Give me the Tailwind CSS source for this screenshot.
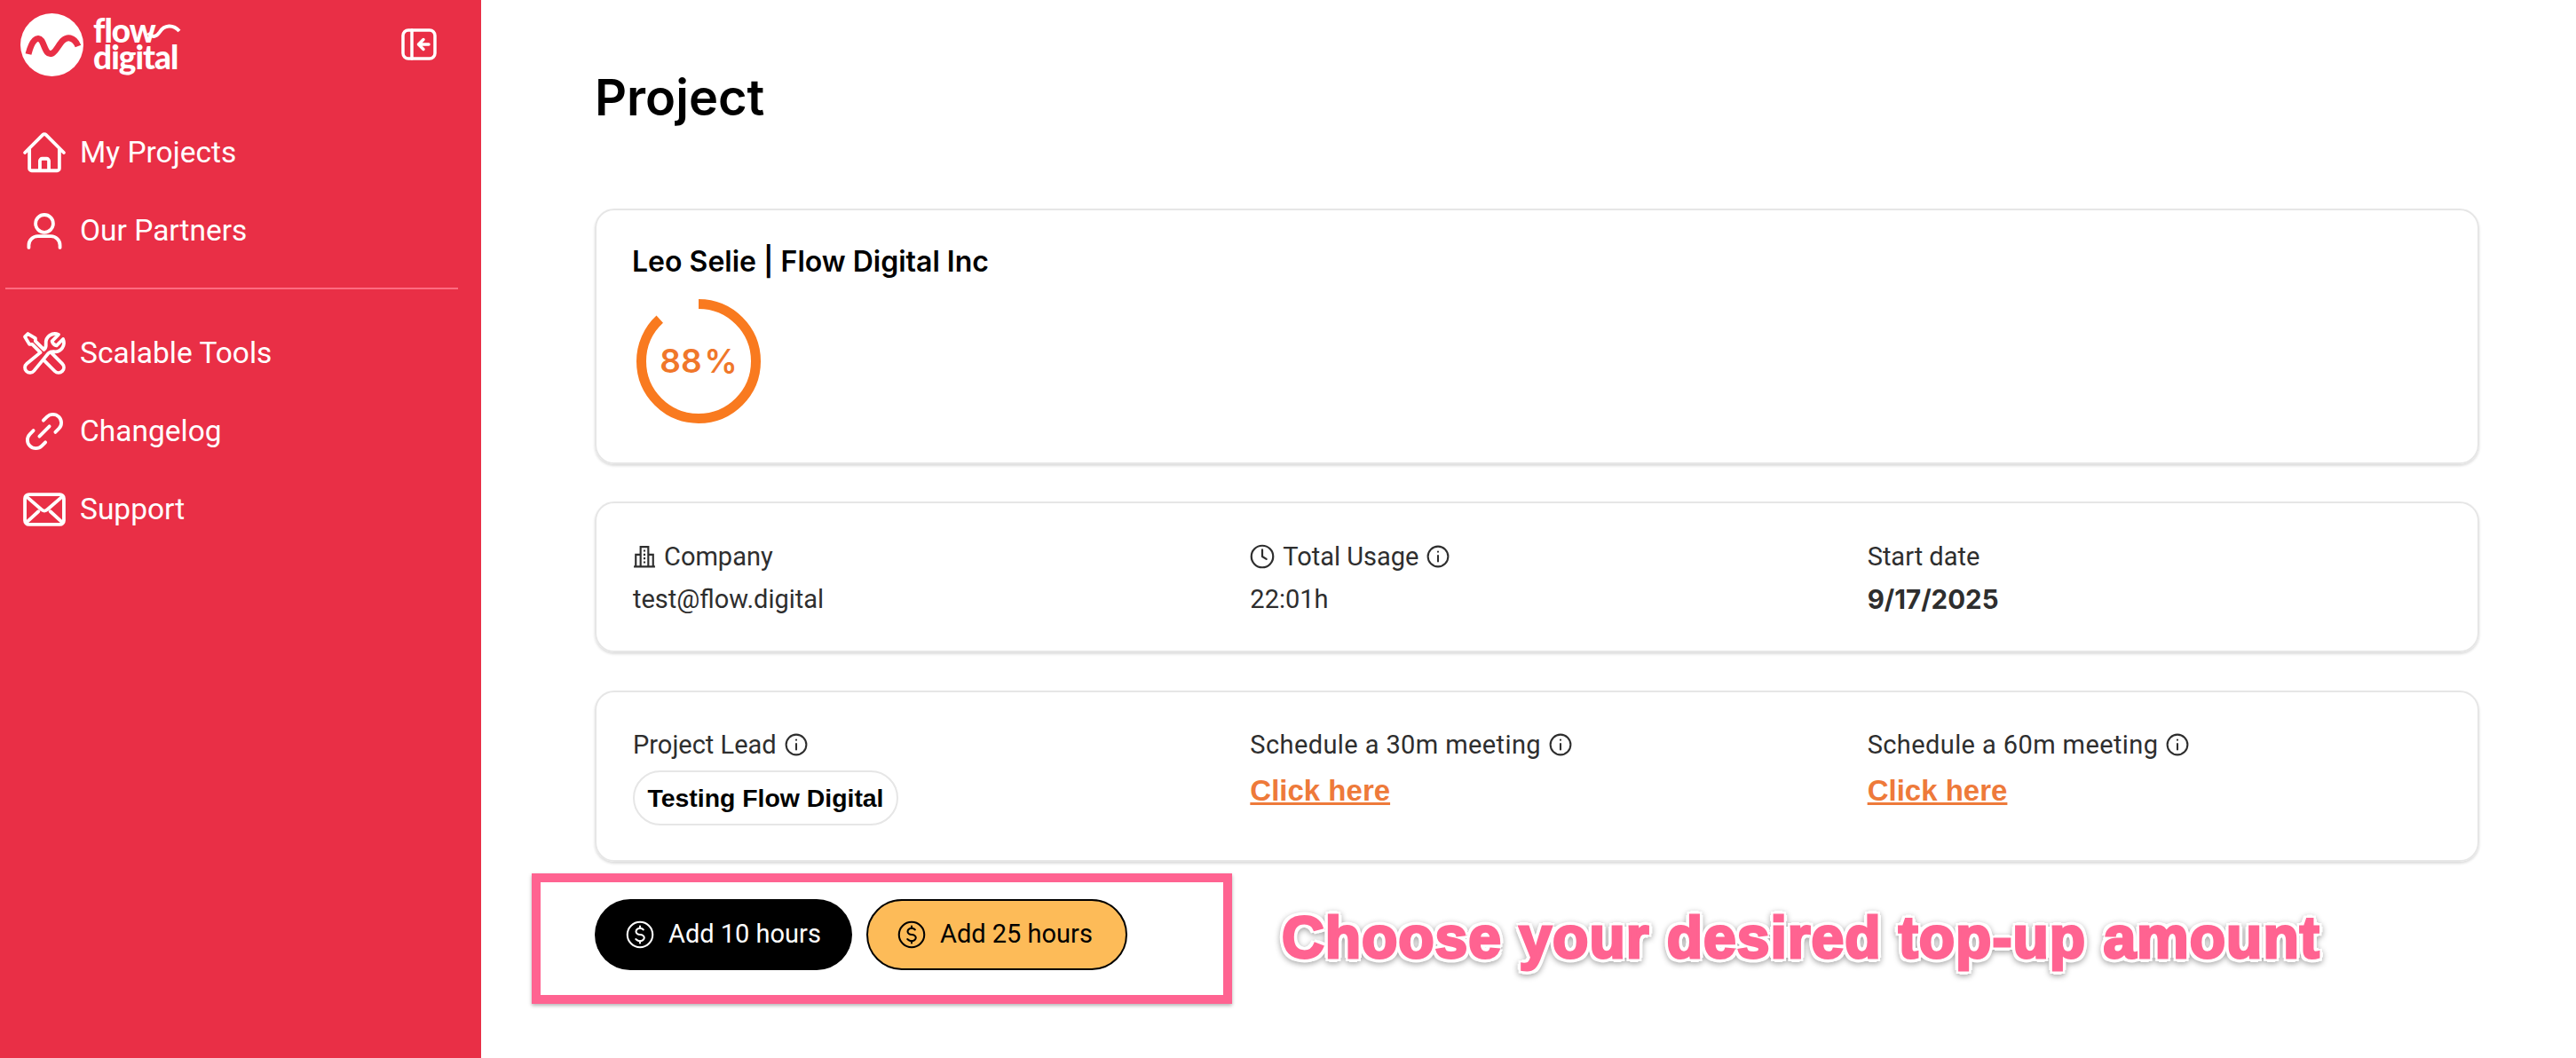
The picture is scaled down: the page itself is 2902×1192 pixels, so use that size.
<!DOCTYPE html>
<html lang="en">
<head>
    <meta charset="UTF-8">
    <title>Project</title>
    <script src="https://cdn.jsdelivr.net/npm/@tailwindcss/browser@4"></script>
</head>
<body class="h-[1192px] overflow-hidden bg-white font-['Roboto',sans-serif]">
<div class="flex h-full">
    <!-- Sidebar -->
    <aside class="w-[542px] shrink-0 bg-[#e92f46] text-white">
        <div class="flex h-[100px] items-center pl-[23px] pr-[50px] mb-[28px]">
            <svg class="w-[71px] h-[71px] shrink-0" viewBox="0 0 71 71">
                <circle cx="35.5" cy="35.5" r="35.5" fill="#fff"/>
                <path d="M9 46C13 30 19 25 24 31C28 38 29 48 36 45C42 42 46 26 56 28C60 29 63 32 65 37" fill="none" stroke="#e92f46" stroke-width="7"/>
            </svg>
            <div class="relative ml-[11px] -mt-[3px] font-['Lato',sans-serif] font-black text-[37px] leading-[30px] tracking-[-1px]">
                flow<br>digital
                <svg class="absolute left-[60px] top-[4px] w-[40px] h-[22px]" viewBox="0 0 40 22">
                    <path d="M2 14C6 20 11 19 15 13C20 5 30 4 37 12" fill="none" stroke="#fff" stroke-width="4"/>
                </svg>
            </div>
            <svg class="ml-auto w-[40px] h-[36px]" viewBox="0 0 40 36" fill="none" stroke="#fff" stroke-width="3.5" stroke-linecap="round" stroke-linejoin="round">
                <rect x="2" y="2" width="36" height="32" rx="6"/>
                <path d="M12 2v32"/>
                <path d="M31 18H20M25 12.5L19.5 18L25 23.5"/>
            </svg>
        </div>
        <nav class="text-[33.5px]">
            <a class="flex h-[88px] items-center gap-[13px] pl-[23px]">
                <svg class="w-[54px] h-[54px]" viewBox="0 0 24 24" fill="none" stroke="#fff" stroke-width="1.7" stroke-linecap="round" stroke-linejoin="round"><path d="M2.25 12l8.954-8.955c.44-.439 1.152-.439 1.591 0L21.75 12M4.5 9.75v10.125c0 .621.504 1.125 1.125 1.125H9.75v-4.875c0-.621.504-1.125 1.125-1.125h2.25c.621 0 1.125.504 1.125 1.125V21h4.125c.621 0 1.125-.504 1.125-1.125V9.75M8.25 21h8.25"/></svg>
                My Projects
            </a>
            <a class="flex h-[88px] items-center gap-[13px] pl-[23px]">
                <svg class="w-[54px] h-[54px]" viewBox="0 0 24 24" fill="none" stroke="#fff" stroke-width="1.7" stroke-linecap="round" stroke-linejoin="round"><circle cx="12" cy="8.4" r="4.4"/><path d="M4.2 20.4v-1.2a4.5 4.5 0 0 1 4.5-4.5h6.6a4.5 4.5 0 0 1 4.5 4.5v1.2"/></svg>
                Our Partners
            </a>
            <div class="ml-[6px] w-[510px] h-[2px] bg-[#ff6b80] mt-[20px] mb-[28px]"></div>
            <a class="flex h-[88px] items-center gap-[13px] pl-[23px]">
                <svg class="w-[54px] h-[54px]" viewBox="0 0 24 24" fill="none" stroke="#fff" stroke-width="1.7" stroke-linecap="round" stroke-linejoin="round"><path d="M11.42 15.17L17.25 21A2.652 2.652 0 0021 17.25l-5.877-5.877M11.42 15.17l2.496-3.03c.317-.384.74-.626 1.208-.766M11.42 15.17l-4.655 5.653a2.548 2.548 0 11-3.586-3.586l6.837-5.63m5.108-.233c.55-.164 1.163-.188 1.743-.14a4.5 4.5 0 004.486-6.336l-3.276 3.277a3.004 3.004 0 01-2.25-2.25l3.276-3.276a4.5 4.5 0 00-6.336 4.486c.091 1.076-.071 2.264-.904 2.95l-.102.085m-1.745 1.437L5.909 7.5H4.5L2.25 3.75l1.5-1.5L7.5 4.5v1.409l4.26 4.26"/></svg>
                Scalable Tools
            </a>
            <a class="flex h-[88px] items-center gap-[13px] pl-[23px]">
                <svg class="w-[54px] h-[54px]" viewBox="0 0 24 24" fill="none" stroke="#fff" stroke-width="1.7" stroke-linecap="round" stroke-linejoin="round"><path d="M9.5 14.5l5-5"/><path d="M11.5 6.5l1.8-1.8a4.2 4.2 0 0 1 5.95 5.95L17.5 12.4"/><path d="M12.5 17.5l-1.8 1.8a4.2 4.2 0 0 1-5.95-5.95L6.5 11.6"/></svg>
                Changelog
            </a>
            <a class="flex h-[88px] items-center gap-[13px] pl-[23px]">
                <svg class="w-[54px] h-[54px]" viewBox="0 0 24 24" fill="none" stroke="#fff" stroke-width="1.7" stroke-linecap="round" stroke-linejoin="round"><rect x="2.25" y="4.5" width="19.5" height="15" rx="2"/><path d="M3 5.5l7.6 6.6a2 2 0 0 0 2.8 0L21 5.5"/><path d="M3 18.5l6-5.5M21 18.5l-6-5.5"/></svg>
                Support
            </a>
        </nav>
    </aside>

    <!-- Main -->
    <main class="flex-1 pl-[128px] pr-[109px] pt-[78px]">
        <h1 class="font-['Inter',sans-serif] font-semibold text-[56px] leading-[64px] text-black mb-[93px]">Project</h1>

        <div class="h-[288px] rounded-[22px] border-2 border-[#e6e6e6] px-[40px] pt-[40px] shadow-[0_2px_3px_rgba(0,0,0,0.14)]">
            <div class="font-['Inter',sans-serif] font-semibold text-[32px] leading-[36px] text-black">Leo Selie | Flow Digital Inc</div>
            <div class="relative mt-[24px] ml-[5px] w-[140px] h-[140px]">
                <svg class="w-[140px] h-[140px] -rotate-90" viewBox="0 0 140 140">
                    <circle cx="70" cy="70" r="64.5" fill="none" stroke="#f97a1f" stroke-width="11" stroke-dasharray="356.6 405.3"/>
                </svg>
                <div class="absolute inset-0 flex items-center justify-center font-['Inter',sans-serif] font-semibold text-[37px] text-[#f0772a]">88<span class="ml-[3px]">%</span></div>
            </div>
        </div>

        <div class="mt-[42px] h-[170px] rounded-[22px] border-2 border-[#e6e6e6] px-[41px] pt-[41px] shadow-[0_2px_3px_rgba(0,0,0,0.14)] grid grid-cols-3 gap-x-[49px] text-[29px] leading-[38px] text-[#2e2e2e]">
            <div>
                <div class="flex items-center gap-[9px]">
                    <svg class="w-[26px] h-[26px]" viewBox="0 0 24 24" fill="none" stroke="#2e2e2e" stroke-width="2"><path d="M1 22.5h22M8 22V2h8v20M8 10H3v12M16 10h5v12M11 6h2M11 10h2M11 14h2M11 18h2"/></svg>
                    Company
                </div>
                <div class="mt-[10px]">test@flow.digital</div>
            </div>
            <div>
                <div class="flex items-center gap-[9px]">
                    <svg class="w-[28px] h-[28px]" viewBox="0 0 24 24" fill="none" stroke="#2e2e2e" stroke-width="1.9" stroke-linecap="round" stroke-linejoin="round"><circle cx="12" cy="12" r="10.5"/><path d="M12 5.5V12l4 2.5"/></svg>
                    Total Usage
                    <svg class="w-[26px] h-[26px]" viewBox="0 0 24 24" fill="none" stroke="#2e2e2e" stroke-width="1.9" stroke-linecap="round"><circle cx="12" cy="12" r="10.5"/><path d="M12 11v6M12 7v.2"/></svg>
                </div>
                <div class="mt-[10px]">22:01h</div>
            </div>
            <div>
                <div>Start date</div>
                <div class="mt-[10px] font-['Inter',sans-serif] font-bold text-[29.5px]">9/17/2025</div>
            </div>
        </div>

        <div class="mt-[43px] h-[193px] rounded-[22px] border-2 border-[#e6e6e6] px-[41px] pt-[40px] shadow-[0_2px_3px_rgba(0,0,0,0.14)] grid grid-cols-3 gap-x-[49px] text-[29px] leading-[38px] text-[#2e2e2e]">
            <div>
                <div class="flex items-center gap-[9px]">
                    Project Lead
                    <svg class="w-[26px] h-[26px]" viewBox="0 0 24 24" fill="none" stroke="#2e2e2e" stroke-width="1.9" stroke-linecap="round"><circle cx="12" cy="12" r="10.5"/><path d="M12 11v6M12 7v.2"/></svg>
                </div>
                <div class="mt-[10px] inline-flex h-[62px] w-[299px] items-center justify-center rounded-full border-2 border-[#e6e6e6] font-['Liberation_Sans',sans-serif] font-bold text-[28.4px] text-black">Testing Flow Digital</div>
            </div>
            <div>
                <div class="flex items-center gap-[9px] tracking-[0.4px]">
                    Schedule a 30m meeting
                    <svg class="w-[26px] h-[26px]" viewBox="0 0 24 24" fill="none" stroke="#2e2e2e" stroke-width="1.9" stroke-linecap="round"><circle cx="12" cy="12" r="10.5"/><path d="M12 11v6M12 7v.2"/></svg>
                </div>
                <a class="block mt-[10px] font-['Liberation_Sans',sans-serif] text-[33px] leading-[46px] font-bold text-[#ee7a3a] underline">Click here</a>
            </div>
            <div>
                <div class="flex items-center gap-[9px] tracking-[0.4px]">
                    Schedule a 60m meeting
                    <svg class="w-[26px] h-[26px]" viewBox="0 0 24 24" fill="none" stroke="#2e2e2e" stroke-width="1.9" stroke-linecap="round"><circle cx="12" cy="12" r="10.5"/><path d="M12 11v6M12 7v.2"/></svg>
                </div>
                <a class="block mt-[10px] font-['Liberation_Sans',sans-serif] text-[33px] leading-[46px] font-bold text-[#ee7a3a] underline">Click here</a>
            </div>
        </div>

        <div class="relative mt-[42px] flex gap-[16px] text-[29px]">
            <button class="flex h-[80px] w-[290px] items-center gap-[13px] rounded-full bg-black pl-[32px] text-white">
                <svg class="w-[38px] h-[38px]" viewBox="0 0 24 24" fill="none" stroke="#fff" stroke-width="1.3" stroke-linecap="round" stroke-linejoin="round"><path d="M12 6v1.6M12 16.4V18M9 15.182l.879.659c1.171.879 3.07.879 4.242 0 1.172-.879 1.172-2.303 0-3.182C13.536 12.219 12.768 12 12 12c-.725 0-1.45-.22-2.003-.659-1.106-.879-1.106-2.303 0-3.182s2.9-.879 4.006 0l.415.33M21 12a9 9 0 11-18 0 9 9 0 0118 0z"/></svg>
                Add 10 hours
            </button>
            <button class="flex h-[80px] w-[294px] items-center gap-[13px] rounded-full border-2 border-black bg-[#fdbb58] pl-[30px] text-black">
                <svg class="w-[38px] h-[38px]" viewBox="0 0 24 24" fill="none" stroke="#000" stroke-width="1.3" stroke-linecap="round" stroke-linejoin="round"><path d="M12 6v1.6M12 16.4V18M9 15.182l.879.659c1.171.879 3.07.879 4.242 0 1.172-.879 1.172-2.303 0-3.182C13.536 12.219 12.768 12 12 12c-.725 0-1.45-.22-2.003-.659-1.106-.879-1.106-2.303 0-3.182s2.9-.879 4.006 0l.415.33M21 12a9 9 0 11-18 0 9 9 0 0118 0z"/></svg>
                Add 25 hours
            </button>

            <!-- annotation over the screenshot -->
            <div class="absolute left-[-71px] top-[-29px] w-[789px] h-[147px] border-[10px] border-[#ff6391] shadow-[0_2px_4px_rgba(0,0,0,0.3)]"></div>
            <div class="absolute left-[774px] top-[3px] whitespace-nowrap font-['Liberation_Sans',sans-serif] font-bold text-[66px] leading-[80px] tracking-[1px] text-[#ff6391] [-webkit-text-stroke:3px_#ff6391] [text-shadow:5px_0_0_#fff,-5px_0_0_#fff,0_5px_0_#fff,0_-5px_0_#fff,4px_4px_0_#fff,-4px_4px_0_#fff,4px_-4px_0_#fff,-4px_-4px_0_#fff] [filter:drop-shadow(0_2px_3px_rgba(0,0,0,0.35))]">Choose your desired top-up amount</div>
        </div>
    </main>
</div>
</body>
</html>
